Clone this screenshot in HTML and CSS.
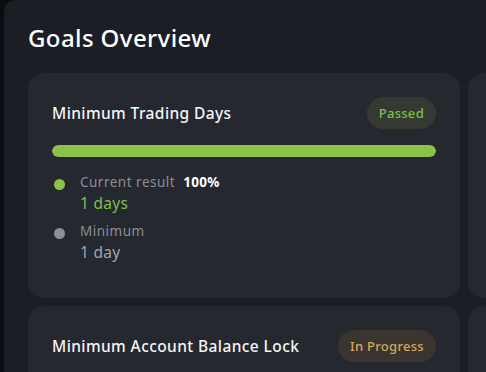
FILE: index.html
```html
<!DOCTYPE html>
<html lang="en">
<head>
  <meta charset="UTF-8">
  <title>Goals Overview</title>
  <meta name="viewport" content="width=device-width, initial-scale=1.0">
  <link rel="stylesheet" href="styles.css">
</head>
<body>

  <div class="panel">
    <h1>Goals Overview</h1>

    <div class="goals">
      <!-- Trading days -->
      <div class="goal-card">
        <div class="goal-head">
          <span class="goal-title">Minimum Trading Days</span>
          <span class="badge passed">Passed</span>
        </div>
        <div class="bar"><div class="bar-fill" style="width: 100%;"></div></div>
        <div class="stats">
          <div class="stat">
            <span class="dot green"></span>
            <div>
              <div class="stat-label">Current result <b>100%</b></div>
              <div class="stat-value green-text">1 days</div>
            </div>
          </div>
          <div class="stat">
            <span class="dot grey"></span>
            <div>
              <div class="stat-label">Minimum</div>
              <div class="stat-value">1 day</div>
            </div>
          </div>
        </div>
      </div>

      <div class="goal-card"></div>

      <!-- Balance lock -->
      <div class="goal-card">
        <div class="goal-head">
          <span class="goal-title">Minimum Account Balance Lock</span>
          <span class="badge progress">In Progress</span>
        </div>
      </div>

      <div class="goal-card"></div>
    </div>
  </div>

</body>
</html>
```

FILE: styles.css
```css
html, body {
  margin: 0;
  height: 100%;
  overflow: hidden;
}

body {
  font-family: 'Noto Sans', 'Lato', sans-serif;
  background-color: #0a0c10;
  color: #f2f3f5;
}

.panel {
  margin-left: 4px;
  height: 100%;
  background-color: #1c1e25;
  border-top-left-radius: 12px;
  padding: 24px 0 0 24px;
  box-sizing: border-box;
}

h1 {
  margin: 0 0 21px;
  font-size: 24px;
  line-height: 28px;
  font-weight: 500;
  letter-spacing: 0.4px;
  color: #ffffff;
}

.goals {
  display: grid;
  grid-template-columns: 432px 432px;
  gap: 8px;
}

.goal-card {
  background-color: #262830;
  border-radius: 16px;
  padding: 24px 24px 34px;
  min-height: 40px;
}

.goal-head {
  display: flex;
  align-items: center;
  justify-content: space-between;
  height: 32px;
}

.goal-title {
  font-size: 15.5px;
  font-weight: 500;
  letter-spacing: 0.4px;
  color: #f4f5f7;
}

.badge {
  height: 32px;
  line-height: 32px;
  padding: 0 12px;
  border-radius: 16px;
  font-size: 13px;
  font-weight: 500;
  letter-spacing: 0.3px;
}

.passed {
  background-color: #343a31;
  color: #7cc046;
}

.progress {
  background-color: #3a352e;
  color: #d6a95c;
}

.bar {
  margin-top: 16px;
  height: 12px;
  border-radius: 6px;
  background-color: #3a3d45;
  overflow: hidden;
}

.bar-fill {
  height: 100%;
  border-radius: 6px;
  background-color: #8bc34a;
}

.stats {
  margin-top: 16px;
  display: flex;
  flex-direction: column;
  gap: 7px;
}

.stat {
  display: flex;
  gap: 15px;
  padding-left: 2px;
}

.dot {
  width: 11px;
  height: 11px;
  border-radius: 50%;
  margin-top: 6px;
  flex-shrink: 0;
}

.dot.green { background-color: #8bc34a; }
.dot.grey { background-color: #8e8f95; }

.stat-label {
  font-size: 13.5px;
  line-height: 18px;
  letter-spacing: 0.5px;
  color: #8b8e98;
}

.stat-label b {
  margin-left: 4px;
  color: #ffffff;
  font-weight: 700;
  letter-spacing: 0.3px;
}

.stat-value {
  font-size: 15.5px;
  line-height: 24px;
  letter-spacing: 0.3px;
  color: #a2a4aa;
}

.green-text {
  color: #7cc046;
}
```
